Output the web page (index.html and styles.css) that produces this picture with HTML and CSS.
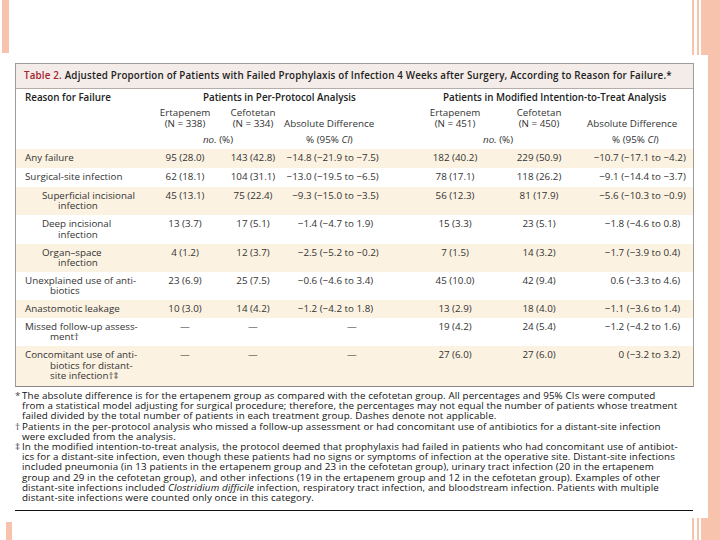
FILE: index.html
```html
<!DOCTYPE html>
<html>
<head>
<meta charset="utf-8">
<link rel="stylesheet" href="styles.css">
</head>
<body>
<div class="slide">
  <div class="tbl-box">
    <div class="title"><span class="tnum">Table 2.</span> Adjusted Proportion of Patients with Failed Prophylaxis of Infection 4 Weeks after Surgery, According to Reason for Failure.*</div>
    <table class="data">
      <colgroup>
        <col class="c-reason"><col class="c-e1"><col class="c-c1"><col class="c-d1"><col class="c-e2"><col class="c-c2"><col class="c-d2">
      </colgroup>
      <thead>
        <tr class="hr1">
          <th class="h-reason">Reason for Failure</th>
          <th colspan="3" class="h-pp">Patients in Per-Protocol Analysis</th>
          <th colspan="3" class="h-mitt">Patients in Modified Intention-to-Treat Analysis</th>
        </tr>
        <tr class="hr2">
          <td></td>
          <td class="ctr">Ertapenem<br>(N = 338)</td>
          <td class="ctr">Cefotetan<br>(N = 334)</td>
          <td class="h-ad1">Absolute Difference</td>
          <td class="ctr">Ertapenem<br>(N = 451)</td>
          <td class="ctr">Cefotetan<br>(N = 450)</td>
          <td class="h-ad2">Absolute Difference</td>
        </tr>
        <tr class="hr3">
          <td></td>
          <td colspan="2" class="ctr"><i>no.</i> (%)</td>
          <td class="h-ci1">% (95% <i>CI</i>)</td>
          <td colspan="2" class="ctr"><i>no.</i> (%)</td>
          <td class="h-ci2">% (95% <i>CI</i>)</td>
        </tr>
      </thead>
      <tbody>
        <tr class="sh h19">
          <td class="r">Any failure</td>
          <td class="ctr">95 (28.0)</td><td class="ctr">143 (42.8)</td>
          <td class="d1"><span class="dl">−14.8 (−21.9</span> to <span>−7.5)</span></td>
          <td class="ctr">182 (40.2)</td><td class="ctr">229 (50.9)</td>
          <td class="d2"><span class="dl">−10.7 (−17.1</span> to <span>−4.2)</span></td>
        </tr>
        <tr class="h19">
          <td class="r">Surgical-site infection</td>
          <td class="ctr">62 (18.1)</td><td class="ctr">104 (31.1)</td>
          <td class="d1"><span class="dl">−13.0 (−19.5</span> to <span>−6.5)</span></td>
          <td class="ctr">78 (17.1)</td><td class="ctr">118 (26.2)</td>
          <td class="d2"><span class="dl">−9.1 (−14.4</span> to <span>−3.7)</span></td>
        </tr>
        <tr class="sh h28">
          <td class="r sub">Superficial incisional<br>infection</td>
          <td class="ctr">45 (13.1)</td><td class="ctr">75 (22.4)</td>
          <td class="d1"><span class="dl">−9.3 (−15.0</span> to <span>−3.5)</span></td>
          <td class="ctr">56 (12.3)</td><td class="ctr">81 (17.9)</td>
          <td class="d2"><span class="dl">−5.6 (−10.3</span> to <span>−0.9)</span></td>
        </tr>
        <tr class="h29">
          <td class="r sub">Deep incisional<br>infection</td>
          <td class="ctr">13 (3.7)</td><td class="ctr">17 (5.1)</td>
          <td class="d1"><span class="dl">−1.4 (−4.7</span> to <span>1.9)</span></td>
          <td class="ctr">15 (3.3)</td><td class="ctr">23 (5.1)</td>
          <td class="d2"><span class="dl">−1.8 (−4.6</span> to <span>0.8)</span></td>
        </tr>
        <tr class="sh h28">
          <td class="r sub">Organ–space<br>infection</td>
          <td class="ctr">4 (1.2)</td><td class="ctr">12 (3.7)</td>
          <td class="d1"><span class="dl">−2.5 (−5.2</span> to <span>−0.2)</span></td>
          <td class="ctr">7 (1.5)</td><td class="ctr">14 (3.2)</td>
          <td class="d2"><span class="dl">−1.7 (−3.9</span> to <span>0.4)</span></td>
        </tr>
        <tr class="h28">
          <td class="r">Unexplained use of anti-<br>biotics</td>
          <td class="ctr">23 (6.9)</td><td class="ctr">25 (7.5)</td>
          <td class="d1"><span class="dl">−0.6 (−4.6</span> to <span>3.4)</span></td>
          <td class="ctr">45 (10.0)</td><td class="ctr">42 (9.4)</td>
          <td class="d2"><span class="dl">0.6 (−3.3</span> to <span>4.6)</span></td>
        </tr>
        <tr class="sh h18">
          <td class="r">Anastomotic leakage</td>
          <td class="ctr">10 (3.0)</td><td class="ctr">14 (4.2)</td>
          <td class="d1"><span class="dl">−1.2 (−4.2</span> to <span>1.8)</span></td>
          <td class="ctr">13 (2.9)</td><td class="ctr">18 (4.0)</td>
          <td class="d2"><span class="dl">−1.1 (−3.6</span> to <span>1.4)</span></td>
        </tr>
        <tr class="h28">
          <td class="r">Missed follow-up assess-<br>ment†</td>
          <td class="ctr">—</td><td class="ctr">—</td>
          <td class="dash">—</td>
          <td class="ctr">19 (4.2)</td><td class="ctr">24 (5.4)</td>
          <td class="d2"><span class="dl">−1.2 (−4.2</span> to <span>1.6)</span></td>
        </tr>
        <tr class="sh h40">
          <td class="r">Concomitant use of anti-<br>biotics for distant-<br>site infection†‡</td>
          <td class="ctr">—</td><td class="ctr">—</td>
          <td class="dash">—</td>
          <td class="ctr">27 (6.0)</td><td class="ctr">27 (6.0)</td>
          <td class="d2"><span class="dl">0 (−3.2</span> to <span>3.2)</span></td>
        </tr>
      </tbody>
    </table>
  </div>

  <div class="notes">
    <div class="fn"><span class="sym">*</span><span class="txt">The absolute difference is for the ertapenem group as compared with the cefotetan group. All percentages and 95% CIs were computed<br>from a statistical model adjusting for surgical procedure; therefore, the percentages may not equal the number of patients whose treatment<br>failed divided by the total number of patients in each treatment group. Dashes denote not applicable.</span></div>
    <div class="fn"><span class="sym">†</span><span class="txt">Patients in the per-protocol analysis who missed a follow-up assessment or had concomitant use of antibiotics for a distant-site infection<br>were excluded from the analysis.</span></div>
    <div class="fn"><span class="sym">‡</span><span class="txt">In the modified intention-to-treat analysis, the protocol deemed that prophylaxis had failed in patients who had concomitant use of antibiot-<br>ics for a distant-site infection, even though these patients had no signs or symptoms of infection at the operative site. Distant-site infections<br>included pneumonia (in 13 patients in the ertapenem group and 23 in the cefotetan group), urinary tract infection (20 in the ertapenem<br>group and 29 in the cefotetan group), and other infections (19 in the ertapenem group and 12 in the cefotetan group). Examples of other<br>distant-site infections included <i>Clostridium difficile</i> infection, respiratory tract infection, and bloodstream infection. Patients with multiple<br>distant-site infections were counted only once in this category.</span></div>
  </div>
  <div class="rule"></div>
</div>
</body>
</html>
```

FILE: styles.css
```css
html, body {
  margin: 0;
  padding: 0;
  width: 720px;
  height: 540px;
  overflow: hidden;
}
body {
  font-family: "Open Sans", "Liberation Sans", sans-serif;
  color: #222;
  background:
    linear-gradient(#f7c3ad, #f7c3ad) 2px 0 / 7px 53px no-repeat,
    linear-gradient(#f7c3ad, #f7c3ad) 6px 522px / 6px 18px no-repeat,
    linear-gradient(#f7c3ad, #f7c3ad) 708px 0 / 12px 540px no-repeat,
    linear-gradient(#f7c3ad, #f7c3ad) 692px 0 / 2px 55px no-repeat,
    linear-gradient(#f7c3ad, #f7c3ad) 697px 0 / 2px 55px no-repeat,
    linear-gradient(#f7c3ad, #f7c3ad) 701px 0 / 7px 55px no-repeat,
    linear-gradient(#f7c3ad, #f7c3ad) 692px 518px / 2px 22px no-repeat,
    linear-gradient(#f7c3ad, #f7c3ad) 697px 518px / 2px 22px no-repeat,
    linear-gradient(#f7c3ad, #f7c3ad) 701px 518px / 7px 22px no-repeat,
    #ffffff;
}
.slide {
  padding: 63px 26px 0 15px;
}
.tbl-box {
  width: 679px;
  box-sizing: border-box;
  border: 1px solid #9c9c9c;
  border-bottom-color: #888;
}
.title {
  height: 24px;
  line-height: 24px;
  padding-left: 8px;
  background: #f4ece8;
  border-bottom: 1px solid #b5aca8;
  font-size: 9.8px;
  letter-spacing: 0.18px;
  font-weight: 600;
  color: #222;
  white-space: nowrap;
}
.tnum {
  color: #a3232f;
}
.data {
  width: 677px;
  table-layout: fixed;
  border-collapse: collapse;
  font-size: 9.8px;
  color: #333;
}
.c-reason { width: 134px; }
.c-e1 { width: 70px; }
.c-c1 { width: 66px; }
.c-d1 { width: 128px; }
.c-e2 { width: 82px; }
.c-c2 { width: 86px; }
.c-d2 { width: 111px; }
.data th, .data td {
  padding: 0;
  white-space: nowrap;
  text-align: left;
}
.hr1 th {
  height: 16px;
  font-weight: 600;
  vertical-align: middle;
  line-height: 11px;
  color: #222;
}
.h-reason { padding-left: 9px !important; }
.h-pp { padding-left: 53px !important; }
.h-mitt { padding-left: 29px !important; }
.hr2 td {
  height: 24px;
  line-height: 11px;
  vertical-align: bottom;
  padding-bottom: 1px !important;
}
.hr3 td {
  height: 19px;
  line-height: 11px;
  vertical-align: middle;
}
.h-ad1 { text-indent: -2px; }
.h-ad2 { padding-left: 5px !important; }
.h-ci1 { padding-left: 20px !important; }
.h-ci2 { padding-left: 30px !important; }
.data td.ctr { text-align: center; }

.data tbody tr.h18 { height: 18px; }
.data tbody tr.h19 { height: 19px; }
.data tbody tr.h28 { height: 28px; }
.data tbody tr.h29 { height: 29px; }
.data tbody tr.h40 { height: 40px; }
.data tbody td {
  vertical-align: top;
  line-height: 10.5px;
  padding-top: 3.75px;
}
.data tbody tr.sh td { background: #fcf2e2; }
.data tbody td.r {
  vertical-align: middle;
  padding-top: 0;
  padding-left: 34px;
  text-indent: -25px;
}
.data tbody td.r.sub {
  padding-left: 42px;
  text-indent: -16px;
}
.dl {
  display: inline-block;
  text-align: right;
}
.d1 .dl { width: 56px; }
.data tbody td.d2 { padding-left: 10px; }
.d2 .dl { width: 57px; }
.data tbody td.dash { padding-left: 61px; }

.notes {
  width: 679px;
  padding-top: 4px;
  font-size: 9.8px;
  letter-spacing: 0.12px;
  line-height: 10.2px;
  color: #111;
}
.fn {
  display: grid;
  grid-template-columns: 7px 1fr;
  white-space: nowrap;
}
.sym { color: #444; letter-spacing: 0; }
.rule {
  width: 678px;
  height: 1px;
  background: #111;
  margin-top: 7px;
}
```
